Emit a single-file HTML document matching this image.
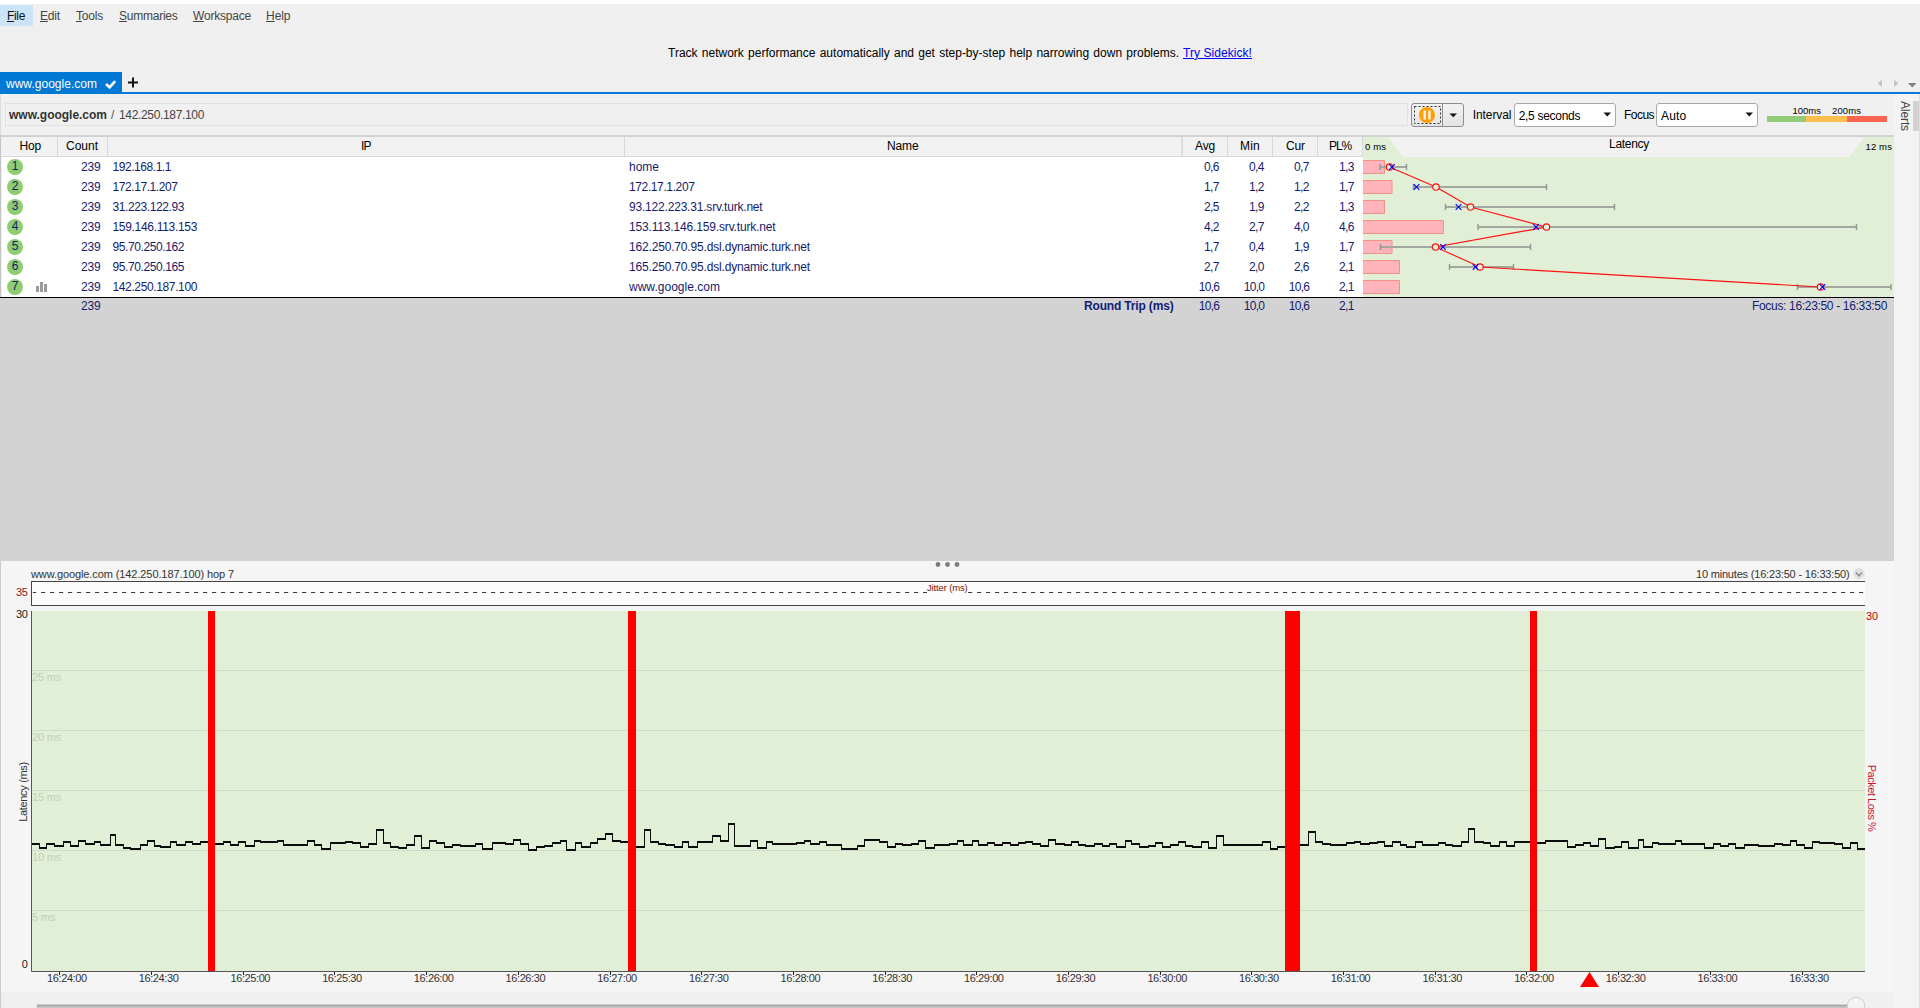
<!DOCTYPE html><html><head><meta charset="utf-8"><title>PingPlotter</title><style>
html,body{margin:0;padding:0;}body{width:1920px;height:1008px;position:relative;overflow:hidden;background:#f0f0f0;font-family:"Liberation Sans", sans-serif;}
.t{position:absolute;white-space:pre;line-height:1;margin:0;padding:0;}
.b{position:absolute;}
svg{position:absolute;left:0;top:0;}
</style></head><body>
<div class="b" style="left:0px;top:0px;width:1920px;height:4px;background:#fff;"></div>
<div class="b" style="left:0px;top:27px;width:1920px;height:45px;background:#efefef;"></div>
<div class="b" style="left:0px;top:5px;width:33px;height:21px;background:#cce4f7;"></div>
<div class="b" style="left:0px;top:72px;width:122px;height:21px;background:#0078d4;"></div>
<div class="b" style="left:0px;top:92px;width:1920px;height:2px;background:#0078d4;"></div>
<div class="b" style="left:0px;top:94px;width:1px;height:41px;background:#dcdcdc;"></div>
<div class="b" style="left:5px;top:103px;width:1403px;height:23px;background:#f0f0f0;border:1px solid #e2e2e2;box-sizing:border-box;"></div>
<div class="b" style="left:1411px;top:103px;width:53px;height:24px;box-sizing:border-box;border:1px solid #8e8e8e;border-radius:3px;background:linear-gradient(#f2f2f2,#e4e4e4);"></div>
<div class="b" style="left:1442px;top:104px;width:1px;height:22px;background:#8e8e8e;"></div>
<div class="b" style="left:1514px;top:103px;width:102px;height:24px;box-sizing:border-box;border:1px solid #a8a8a8;border-radius:3px;background:#fff;"></div>
<div class="b" style="left:1656px;top:103px;width:102px;height:24px;box-sizing:border-box;border:1px solid #a8a8a8;border-radius:3px;background:#fff;"></div>
<div class="b" style="left:1767px;top:116px;width:39px;height:6px;background:#93cb76;"></div>
<div class="b" style="left:1806px;top:116px;width:41px;height:6px;background:#fdbd4f;"></div>
<div class="b" style="left:1847px;top:116px;width:40px;height:6px;background:#f96352;"></div>
<div class="b" style="left:1894px;top:94px;width:26px;height:914px;background:#f3f3f3;"></div>
<div class="b" style="left:1913px;top:101px;width:7px;height:30px;background:#d2d2d2;"></div>
<div class="b" style="left:1919px;top:94px;width:1px;height:914px;background:#e0e0e0;"></div>
<div class="b" style="left:0px;top:135px;width:1894px;height:2px;background:#d2d2d2;"></div>
<div class="b" style="left:0px;top:137px;width:1px;height:160px;background:#c4c4c4;"></div>
<div class="b" style="left:2px;top:137px;width:1892px;height:20px;background:#f2f2f2;"></div>
<div class="b" style="left:57px;top:137px;width:1px;height:19px;background:#d9d9d9;"></div>
<div class="b" style="left:107px;top:137px;width:1px;height:19px;background:#d9d9d9;"></div>
<div class="b" style="left:624px;top:137px;width:1px;height:19px;background:#d9d9d9;"></div>
<div class="b" style="left:1182px;top:137px;width:1px;height:19px;background:#d9d9d9;"></div>
<div class="b" style="left:1227px;top:137px;width:1px;height:19px;background:#d9d9d9;"></div>
<div class="b" style="left:1272px;top:137px;width:1px;height:19px;background:#d9d9d9;"></div>
<div class="b" style="left:1317px;top:137px;width:1px;height:19px;background:#d9d9d9;"></div>
<div class="b" style="left:1362px;top:137px;width:1px;height:19px;background:#d9d9d9;"></div>
<div class="b" style="left:1181px;top:137px;width:1px;height:19px;background:#e2e2e2;"></div>
<div class="b" style="left:2px;top:156px;width:1361px;height:1px;background:#d9d9d9;"></div>
<div class="b" style="left:2px;top:157px;width:1361px;height:140px;background:#fff;"></div>
<div class="b" style="left:1363px;top:157px;width:531px;height:140px;background:#e0efd6;"></div>
<div class="b" style="left:0px;top:297px;width:1894px;height:264px;background:#d3d3d3;"></div>
<div class="b" style="left:0px;top:297px;width:1894px;height:1px;background:#000;"></div>
<div class="b" style="left:0px;top:561px;width:1894px;height:431px;background:#f5f5f5;"></div>
<div class="b" style="left:0px;top:561px;width:1px;height:447px;background:#cbcbcb;"></div>
<div class="b" style="left:2px;top:992px;width:1892px;height:16px;background:#f0f0f0;"></div>
<div class="b" style="left:31px;top:581px;width:1834px;height:25px;background:#fcfcfc;border:1px solid #444;border-right:none;box-sizing:border-box;"></div>
<div class="b" style="left:32px;top:611px;width:1833px;height:360px;background:#e0efd6;"></div>
<svg width="1920" height="1008" viewBox="0 0 1920 1008"><path d="M106 84l3.6 3.3l5.6-6.2" fill="none" stroke="#fff" stroke-width="2.6"/><path d="M128 82.5h10M133 77.5v10" stroke="#151515" stroke-width="2"/><path d="M1882 79.5v7.5l-4.5-3.75z" fill="#c4c4c4"/><path d="M1894 79.5v7.5l4.5-3.75z" fill="#c4c4c4"/><path d="M1908 83h8.5l-4.25 4.5z" fill="#808080"/><rect x="1414.5" y="106.5" width="26" height="17" fill="none" stroke="#333" stroke-width="1" stroke-dasharray="2 2"/><circle cx="1427" cy="115" r="8" fill="#ffa000"/><rect x="1423.5" y="110.5" width="2.3" height="9" fill="#eef3ff"/><rect x="1428.3" y="110.5" width="2.3" height="9" fill="#eef3ff"/><path d="M1449.5 113.5h7.5l-3.75 3.8z" fill="#111"/><path d="M1603.5 112.5h7.5l-3.75 4z" fill="#111"/><path d="M1745.5 112.5h7.5l-3.75 4z" fill="#111"/><path d="M1363 137H1388.4L1403 157H1363z" fill="#e0efd6"/><path d="M1864.4 137H1894V157H1849.4z" fill="#e0efd6"/><circle cx="15" cy="167" r="8" fill="#90cc70"/><circle cx="15" cy="187" r="8" fill="#90cc70"/><circle cx="15" cy="207" r="8" fill="#90cc70"/><circle cx="15" cy="227" r="8" fill="#90cc70"/><circle cx="15" cy="247" r="8" fill="#90cc70"/><circle cx="15" cy="267" r="8" fill="#90cc70"/><circle cx="15" cy="287" r="8" fill="#90cc70"/><path d="M36 286h3v6h-3zM40 282h3v10h-3zM44 284h3v8h-3z" fill="#9b9b9b"/><rect x="1363" y="160" width="21.5" height="14" fill="#ffb3ba"/><path d="M1363 160.5H1384.5V173.5H1363" fill="none" stroke="#f29284" stroke-width="1"/><rect x="1363" y="180" width="29" height="14" fill="#ffb3ba"/><path d="M1363 180.5H1392V193.5H1363" fill="none" stroke="#f29284" stroke-width="1"/><rect x="1363" y="200" width="21.5" height="14" fill="#ffb3ba"/><path d="M1363 200.5H1384.5V213.5H1363" fill="none" stroke="#f29284" stroke-width="1"/><rect x="1363" y="220" width="80.5" height="14" fill="#ffb3ba"/><path d="M1363 220.5H1443.5V233.5H1363" fill="none" stroke="#f29284" stroke-width="1"/><rect x="1363" y="240" width="29" height="14" fill="#ffb3ba"/><path d="M1363 240.5H1392V253.5H1363" fill="none" stroke="#f29284" stroke-width="1"/><rect x="1363" y="260" width="36.5" height="14" fill="#ffb3ba"/><path d="M1363 260.5H1399.5V273.5H1363" fill="none" stroke="#f29284" stroke-width="1"/><rect x="1363" y="280" width="36.5" height="14" fill="#ffb3ba"/><path d="M1363 280.5H1399.5V293.5H1363" fill="none" stroke="#f29284" stroke-width="1"/><path d="M1380 167H1406.5" stroke="#a2a8a0" stroke-width="2" fill="none"/><path d="M1380 164v6M1406.5 164v6" stroke="#909690" stroke-width="1.4" fill="none"/><path d="M1413.5 187H1546.5" stroke="#a2a8a0" stroke-width="2" fill="none"/><path d="M1413.5 184v6M1546.5 184v6" stroke="#909690" stroke-width="1.4" fill="none"/><path d="M1445.5 207H1614.5" stroke="#a2a8a0" stroke-width="2" fill="none"/><path d="M1445.5 204v6M1614.5 204v6" stroke="#909690" stroke-width="1.4" fill="none"/><path d="M1478 227H1856.5" stroke="#a2a8a0" stroke-width="2" fill="none"/><path d="M1478 224v6M1856.5 224v6" stroke="#909690" stroke-width="1.4" fill="none"/><path d="M1380.5 247H1530.5" stroke="#a2a8a0" stroke-width="2" fill="none"/><path d="M1380.5 244v6M1530.5 244v6" stroke="#909690" stroke-width="1.4" fill="none"/><path d="M1449.5 267H1513.5" stroke="#a2a8a0" stroke-width="2" fill="none"/><path d="M1449.5 264v6M1513.5 264v6" stroke="#909690" stroke-width="1.4" fill="none"/><path d="M1797.5 287H1891" stroke="#a2a8a0" stroke-width="2" fill="none"/><path d="M1797.5 284v6M1891 284v6" stroke="#909690" stroke-width="1.4" fill="none"/><polyline points="1389.5,167 1436,187 1470.5,207 1546.5,227 1435.5,247 1480,267 1820.5,287" fill="none" stroke="#ff1010" stroke-width="1.15"/><circle cx="1389.5" cy="167" r="3.2" fill="#e0efd6" stroke="#ff1010" stroke-width="1.15"/><circle cx="1436" cy="187" r="3.2" fill="#e0efd6" stroke="#ff1010" stroke-width="1.15"/><circle cx="1470.5" cy="207" r="3.2" fill="#e0efd6" stroke="#ff1010" stroke-width="1.15"/><circle cx="1546.5" cy="227" r="3.2" fill="#e0efd6" stroke="#ff1010" stroke-width="1.15"/><circle cx="1435.5" cy="247" r="3.2" fill="#e0efd6" stroke="#ff1010" stroke-width="1.15"/><circle cx="1480" cy="267" r="3.2" fill="#e0efd6" stroke="#ff1010" stroke-width="1.15"/><circle cx="1820.5" cy="287" r="3.2" fill="#e0efd6" stroke="#ff1010" stroke-width="1.15"/><path d="M1389.2 164.2l5.6 5.6M1389.2 169.8l5.6 -5.6" stroke="#0000ff" stroke-width="1.1" fill="none"/><path d="M1413.7 184.2l5.6 5.6M1413.7 189.8l5.6 -5.6" stroke="#0000ff" stroke-width="1.1" fill="none"/><path d="M1455.7 204.2l5.6 5.6M1455.7 209.8l5.6 -5.6" stroke="#0000ff" stroke-width="1.1" fill="none"/><path d="M1533.2 224.2l5.6 5.6M1533.2 229.8l5.6 -5.6" stroke="#0000ff" stroke-width="1.1" fill="none"/><path d="M1440.2 244.2l5.6 5.6M1440.2 249.8l5.6 -5.6" stroke="#0000ff" stroke-width="1.1" fill="none"/><path d="M1472.7 264.2l5.6 5.6M1472.7 269.8l5.6 -5.6" stroke="#0000ff" stroke-width="1.1" fill="none"/><path d="M1819.7 284.2l5.6 5.6M1819.7 289.8l5.6 -5.6" stroke="#0000ff" stroke-width="1.1" fill="none"/><circle cx="938" cy="564.5" r="2.4" fill="#7c7c7c"/><circle cx="947.5" cy="564.5" r="2.4" fill="#7c7c7c"/><circle cx="957" cy="564.5" r="2.4" fill="#7c7c7c"/><circle cx="1859" cy="573.8" r="5.7" fill="#e0e0e0"/><path d="M1856 572.6l3 3.2l3-3.2" fill="none" stroke="#909090" stroke-width="1.5"/><path d="M32.9 592.5H1864" stroke="#3a3a3a" stroke-width="1.2" stroke-dasharray="4.2 4.8" stroke-dashoffset="0.9" fill="none"/><path d="M32 670.5H1865" stroke="#cfddc6" stroke-width="1"/><path d="M32 730.5H1865" stroke="#cfddc6" stroke-width="1"/><path d="M32 790.5H1865" stroke="#cfddc6" stroke-width="1"/><path d="M32 850.5H1865" stroke="#cfddc6" stroke-width="1"/><path d="M32 910.5H1865" stroke="#cfddc6" stroke-width="1"/><path d="M31.5 611V971.5H1865" stroke="#555" stroke-width="1" fill="none"/><path d="M32 843h8v2h-8zM39 843h1v6h-1zM39 847h8v2h-8zM46 843h1v6h-1zM46 843h9v2h-9zM54 843h1v4h-1zM54 845h10v2h-10zM63 841h1v6h-1zM63 841h8v2h-8zM70 841h1v6h-1zM70 845h9v2h-9zM78 840h1v7h-1zM78 840h8v2h-8zM85 840h1v5h-1zM85 843h10v2h-10zM94 841h1v4h-1zM94 841h7v2h-7zM100 841h1v5h-1zM100 844h11v2h-11zM110 834h1v12h-1zM110 834h6v2h-6zM115 834h1v12h-1zM115 844h9v2h-9zM123 844h1v5h-1zM123 847h8v2h-8zM130 847h1v3h-1zM130 848h11v2h-11zM140 844h1v6h-1zM140 844h8v2h-8zM147 840h1v6h-1zM147 840h8v2h-8zM154 840h1v7h-1zM154 845h7v2h-7zM160 845h1v3h-1zM160 846h11v2h-11zM170 841h1v7h-1zM170 841h7v2h-7zM176 841h1v5h-1zM176 844h10v2h-10zM185 841h1v5h-1zM185 841h8v2h-8zM192 841h1v4h-1zM192 843h9v2h-9zM200 841h1v4h-1zM200 841h12v2h-12zM211 841h1v4h-1zM211 843h13v2h-13zM223 841h1v4h-1zM223 841h8v2h-8zM230 841h1v5h-1zM230 844h9v2h-9zM238 841h1v5h-1zM238 841h8v2h-8zM245 841h1v6h-1zM245 845h10v2h-10zM254 840h1v7h-1zM254 840h7v2h-7zM260 840h1v3h-1zM260 841h18v2h-18zM277 840h1v3h-1zM277 840h7v2h-7zM283 840h1v6h-1zM283 844h25v2h-25zM307 840h1v6h-1zM307 840h8v2h-8zM314 840h1v6h-1zM314 844h8v2h-8zM321 844h1v6h-1zM321 848h10v2h-10zM330 842h1v8h-1zM330 842h16v2h-16zM345 841h1v3h-1zM345 841h8v2h-8zM352 841h1v3h-1zM352 842h9v2h-9zM360 842h1v6h-1zM360 846h9v2h-9zM368 843h1v5h-1zM368 843h9v2h-9zM376 829h1v16h-1zM376 829h8v2h-8zM383 829h1v15h-1zM383 842h8v2h-8zM390 842h1v6h-1zM390 846h9v2h-9zM398 846h1v3h-1zM398 847h9v2h-9zM406 844h1v5h-1zM406 844h9v2h-9zM414 835h1v11h-1zM414 835h8v2h-8zM421 835h1v14h-1zM421 847h9v2h-9zM429 840h1v9h-1zM429 840h8v2h-8zM436 840h1v4h-1zM436 842h9v2h-9zM444 842h1v6h-1zM444 846h9v2h-9zM452 844h1v4h-1zM452 844h9v2h-9zM460 844h1v3h-1zM460 845h16v2h-16zM475 843h1v4h-1zM475 843h8v2h-8zM482 843h1v7h-1zM482 848h11v2h-11zM492 842h1v8h-1zM492 842h14v2h-14zM505 842h1v3h-1zM505 843h9v2h-9zM513 839h1v6h-1zM513 839h8v2h-8zM520 839h1v6h-1zM520 843h9v2h-9zM528 843h1v8h-1zM528 849h9v2h-9zM536 846h1v5h-1zM536 846h9v2h-9zM544 845h1v3h-1zM544 845h9v2h-9zM552 842h1v5h-1zM552 842h9v2h-9zM560 840h1v4h-1zM560 840h7v2h-7zM566 840h1v11h-1zM566 849h10v2h-10zM575 842h1v9h-1zM575 842h7v2h-7zM581 842h1v6h-1zM581 846h10v2h-10zM590 842h1v6h-1zM590 842h8v2h-8zM597 838h1v6h-1zM597 838h9v2h-9zM605 833h1v7h-1zM605 833h8v2h-8zM612 833h1v9h-1zM612 840h9v2h-9zM620 840h1v3h-1zM620 841h13v2h-13zM632 841h1v7h-1zM632 846h13v2h-13zM644 829h1v19h-1zM644 829h7v2h-7zM650 829h1v14h-1zM650 841h9v2h-9zM658 841h1v4h-1zM658 843h8v2h-8zM665 843h1v3h-1zM665 844h10v2h-10zM674 844h1v4h-1zM674 846h9v2h-9zM682 841h1v7h-1zM682 841h7v2h-7zM688 841h1v7h-1zM688 846h10v2h-10zM697 841h1v7h-1zM697 841h16v2h-16zM712 835h1v8h-1zM712 835h9v2h-9zM720 835h1v7h-1zM720 840h9v2h-9zM728 823h1v19h-1zM728 823h7v2h-7zM734 823h1v24h-1zM734 845h17v2h-17zM750 840h1v7h-1zM750 840h8v2h-8zM757 840h1v9h-1zM757 847h10v2h-10zM766 841h1v8h-1zM766 841h7v2h-7zM772 841h1v4h-1zM772 843h25v2h-25zM796 842h1v3h-1zM796 842h9v2h-9zM804 840h1v4h-1zM804 840h7v2h-7zM810 840h1v5h-1zM810 843h10v2h-10zM819 841h1v4h-1zM819 841h8v2h-8zM826 841h1v5h-1zM826 844h16v2h-16zM841 844h1v6h-1zM841 848h17v2h-17zM857 845h1v5h-1zM857 845h8v2h-8zM864 839h1v8h-1zM864 839h16v2h-16zM879 839h1v4h-1zM879 841h9v2h-9zM887 841h1v7h-1zM887 846h9v2h-9zM895 843h1v5h-1zM895 843h8v2h-8zM902 843h1v3h-1zM902 844h10v2h-10zM911 843h1v3h-1zM911 843h8v2h-8zM918 840h1v5h-1zM918 840h8v2h-8zM925 840h1v9h-1zM925 847h10v2h-10zM934 844h1v5h-1zM934 844h16v2h-16zM949 843h1v3h-1zM949 843h9v2h-9zM957 840h1v5h-1zM957 840h7v2h-7zM963 840h1v6h-1zM963 844h10v2h-10zM972 840h1v6h-1zM972 840h7v2h-7zM978 840h1v6h-1zM978 844h10v2h-10zM987 842h1v4h-1zM987 842h8v2h-8zM994 842h1v4h-1zM994 844h9v2h-9zM1002 842h1v4h-1zM1002 842h9v2h-9zM1010 842h1v4h-1zM1010 844h9v2h-9zM1018 842h1v4h-1zM1018 842h8v2h-8zM1025 841h1v3h-1zM1025 841h8v2h-8zM1032 841h1v4h-1zM1032 843h9v2h-9zM1040 843h1v4h-1zM1040 845h9v2h-9zM1048 839h1v8h-1zM1048 839h8v2h-8zM1055 839h1v6h-1zM1055 843h10v2h-10zM1064 843h1v3h-1zM1064 844h8v2h-8zM1071 841h1v5h-1zM1071 841h8v2h-8zM1078 841h1v5h-1zM1078 844h8v2h-8zM1085 844h1v3h-1zM1085 845h10v2h-10zM1094 843h1v4h-1zM1094 843h9v2h-9zM1102 843h1v4h-1zM1102 845h8v2h-8zM1109 843h1v4h-1zM1109 843h8v2h-8zM1116 843h1v5h-1zM1116 846h10v2h-10zM1125 840h1v8h-1zM1125 840h7v2h-7zM1131 840h1v5h-1zM1131 843h9v2h-9zM1139 843h1v5h-1zM1139 846h10v2h-10zM1148 845h1v3h-1zM1148 845h8v2h-8zM1155 842h1v5h-1zM1155 842h8v2h-8zM1162 842h1v6h-1zM1162 846h9v2h-9zM1170 844h1v4h-1zM1170 844h9v2h-9zM1178 841h1v5h-1zM1178 841h8v2h-8zM1185 841h1v6h-1zM1185 845h8v2h-8zM1192 845h1v3h-1zM1192 846h10v2h-10zM1201 841h1v7h-1zM1201 841h8v2h-8zM1208 841h1v8h-1zM1208 847h9v2h-9zM1216 835h1v14h-1zM1216 835h8v2h-8zM1223 835h1v11h-1zM1223 844h40v2h-40zM1262 841h1v5h-1zM1262 841h9v2h-9zM1270 841h1v9h-1zM1270 848h8v2h-8zM1277 846h1v4h-1zM1277 846h16v2h-16zM1292 844h1v4h-1zM1292 844h17v2h-17zM1308 831h1v15h-1zM1308 831h8v2h-8zM1315 831h1v12h-1zM1315 841h8v2h-8zM1322 841h1v4h-1zM1322 843h9v2h-9zM1330 843h1v3h-1zM1330 844h17v2h-17zM1346 842h1v4h-1zM1346 842h9v2h-9zM1354 841h1v3h-1zM1354 841h7v2h-7zM1360 841h1v4h-1zM1360 843h10v2h-10zM1369 842h1v3h-1zM1369 842h9v2h-9zM1377 841h1v3h-1zM1377 841h8v2h-8zM1384 841h1v6h-1zM1384 845h9v2h-9zM1392 841h1v6h-1zM1392 841h9v2h-9zM1400 841h1v5h-1zM1400 844h7v2h-7zM1406 844h1v4h-1zM1406 846h10v2h-10zM1415 841h1v7h-1zM1415 841h8v2h-8zM1422 841h1v5h-1zM1422 844h17v2h-17zM1438 842h1v4h-1zM1438 842h8v2h-8zM1445 842h1v4h-1zM1445 844h8v2h-8zM1452 844h1v3h-1zM1452 845h10v2h-10zM1461 841h1v6h-1zM1461 841h8v2h-8zM1468 828h1v15h-1zM1468 828h7v2h-7zM1474 828h1v15h-1zM1474 841h10v2h-10zM1483 841h1v3h-1zM1483 842h8v2h-8zM1490 842h1v5h-1zM1490 845h10v2h-10zM1499 841h1v6h-1zM1499 841h8v2h-8zM1506 841h1v6h-1zM1506 845h9v2h-9zM1514 841h1v6h-1zM1514 841h20v2h-20zM1533 841h1v3h-1zM1533 842h13v2h-13zM1545 840h1v4h-1zM1545 840h23v2h-23zM1567 840h1v8h-1zM1567 846h9v2h-9zM1575 844h1v4h-1zM1575 844h9v2h-9zM1583 842h1v4h-1zM1583 842h8v2h-8zM1590 842h1v5h-1zM1590 845h9v2h-9zM1598 838h1v9h-1zM1598 838h8v2h-8zM1605 838h1v11h-1zM1605 847h10v2h-10zM1614 846h1v3h-1zM1614 846h8v2h-8zM1621 841h1v7h-1zM1621 841h8v2h-8zM1628 841h1v8h-1zM1628 847h11v2h-11zM1638 839h1v10h-1zM1638 839h6v2h-6zM1643 839h1v9h-1zM1643 846h10v2h-10zM1652 842h1v6h-1zM1652 842h7v2h-7zM1658 842h1v3h-1zM1658 843h18v2h-18zM1675 840h1v5h-1zM1675 840h7v2h-7zM1681 840h1v5h-1zM1681 843h24v2h-24zM1704 843h1v6h-1zM1704 847h10v2h-10zM1713 843h1v6h-1zM1713 843h8v2h-8zM1720 843h1v4h-1zM1720 845h9v2h-9zM1728 843h1v4h-1zM1728 843h8v2h-8zM1735 843h1v6h-1zM1735 847h10v2h-10zM1744 844h1v5h-1zM1744 844h15v2h-15zM1758 844h1v3h-1zM1758 845h17v2h-17zM1774 843h1v4h-1zM1774 843h9v2h-9zM1782 843h1v3h-1zM1782 844h9v2h-9zM1790 840h1v6h-1zM1790 840h7v2h-7zM1796 840h1v6h-1zM1796 844h9v2h-9zM1804 844h1v5h-1zM1804 847h9v2h-9zM1812 841h1v8h-1zM1812 841h8v2h-8zM1819 841h1v3h-1zM1819 842h16v2h-16zM1834 842h1v3h-1zM1834 843h9v2h-9zM1842 843h1v6h-1zM1842 847h9v2h-9zM1850 842h1v7h-1zM1850 842h8v2h-8zM1857 842h1v8h-1zM1857 848h8v2h-8z" fill="#0c0c0c"/><rect x="208" y="611" width="7" height="360" fill="#ff0000"/><rect x="628" y="611" width="8" height="360" fill="#ff0000"/><rect x="1285" y="611" width="15" height="360" fill="#ff0000"/><rect x="1530" y="611" width="7" height="360" fill="#ff0000"/><path d="M59.5 972v3" stroke="#222" stroke-width="1"/><path d="M151.5 972v3" stroke="#222" stroke-width="1"/><path d="M243.5 972v3" stroke="#222" stroke-width="1"/><path d="M334.5 972v3" stroke="#222" stroke-width="1"/><path d="M426.5 972v3" stroke="#222" stroke-width="1"/><path d="M518.5 972v3" stroke="#222" stroke-width="1"/><path d="M610.5 972v3" stroke="#222" stroke-width="1"/><path d="M701.5 972v3" stroke="#222" stroke-width="1"/><path d="M793.5 972v3" stroke="#222" stroke-width="1"/><path d="M885.5 972v3" stroke="#222" stroke-width="1"/><path d="M976.5 972v3" stroke="#222" stroke-width="1"/><path d="M1068.5 972v3" stroke="#222" stroke-width="1"/><path d="M1160.5 972v3" stroke="#222" stroke-width="1"/><path d="M1251.5 972v3" stroke="#222" stroke-width="1"/><path d="M1343.5 972v3" stroke="#222" stroke-width="1"/><path d="M1435.5 972v3" stroke="#222" stroke-width="1"/><path d="M1526.5 972v3" stroke="#222" stroke-width="1"/><path d="M1618.5 972v3" stroke="#222" stroke-width="1"/><path d="M1710.5 972v3" stroke="#222" stroke-width="1"/><path d="M1802.5 972v3" stroke="#222" stroke-width="1"/><path d="M1589.5 972l9.5 15h-19z" fill="#ff0000"/><defs><linearGradient id="sg" x1="0" y1="0" x2="0" y2="1"><stop offset="0" stop-color="#9c9c9c"/><stop offset="1" stop-color="#cdcdcd"/></linearGradient></defs><rect x="36.7" y="1004.6" width="1812" height="3.4" fill="url(#sg)"/><circle cx="1856" cy="1006" r="8.8" fill="#f3f3f3" stroke="#cfcfcf" stroke-width="1"/></svg>
<div class="t" id="t0" style="left:7px;top:9.842px;font-size:12px;color:#111;letter-spacing:-0.340px;"><u>F</u>ile</div>
<div class="t" id="t1" style="left:40px;top:9.842px;font-size:12px;color:#444;letter-spacing:-0.176px;"><u>E</u>dit</div>
<div class="t" id="t2" style="left:76px;top:9.842px;font-size:12px;color:#444;letter-spacing:-0.203px;"><u>T</u>ools</div>
<div class="t" id="t3" style="left:119px;top:9.842px;font-size:12px;color:#444;letter-spacing:-0.245px;"><u>S</u>ummaries</div>
<div class="t" id="t4" style="left:193px;top:9.842px;font-size:12px;color:#444;letter-spacing:-0.201px;"><u>W</u>orkspace</div>
<div class="t" id="t5" style="left:266px;top:9.842px;font-size:12px;color:#444;letter-spacing:-0.047px;"><u>H</u>elp</div>
<div class="t" id="t6" style="left:668px;top:46.842px;font-size:12px;color:#000;word-spacing:0.920px;">Track network performance automatically and get step-by-step help narrowing down problems.</div>
<div class="t" id="t7" style="left:1183px;top:46.842px;font-size:12px;color:#0000ee;letter-spacing:0.059px;text-decoration:underline;">Try Sidekick!</div>
<div class="t" id="t8" style="left:6px;top:77.842px;font-size:12px;color:#fff;letter-spacing:0.020px;">www.google.com</div>
<div class="t" id="t9" style="left:9px;top:108.842px;font-size:12px;color:#333;font-weight:700;letter-spacing:-0.017px;">www.google.com</div>
<div class="t" id="t10" style="left:111px;top:108.842px;font-size:12px;color:#555;letter-spacing:0.656px;">/</div>
<div class="t" id="t11" style="left:119px;top:108.842px;font-size:12px;color:#444;letter-spacing:-0.340px;">142.250.187.100</div>
<div class="t" id="t12" style="left:1472.8px;top:108.842px;font-size:12px;color:#000;letter-spacing:-0.107px;">Interval</div>
<div class="t" id="t13" style="left:1518.7px;top:109.842px;font-size:12px;color:#000;letter-spacing:-0.293px;">2,5 seconds</div>
<div class="t" id="t14" style="left:1624px;top:108.842px;font-size:12px;color:#000;letter-spacing:-0.537px;">Focus</div>
<div class="t" id="t15" style="left:1661px;top:109.842px;font-size:12px;color:#000;letter-spacing:0.178px;">Auto</div>
<div class="t" id="t16" style="left:1792.5px;top:105.958px;font-size:9.5px;color:#000;letter-spacing:-0.003px;">100ms</div>
<div class="t" id="t17" style="left:1832px;top:105.958px;font-size:9.5px;color:#000;letter-spacing:0.097px;">200ms</div>
<div class="t" id="t18" style="left:19.5px;top:139.842px;font-size:12px;color:#000;letter-spacing:-0.172px;">Hop</div>
<div class="t" id="t19" style="left:66px;top:139.842px;font-size:12px;color:#000;letter-spacing:-0.006px;">Count</div>
<div class="t" id="t20" style="left:361px;top:139.842px;font-size:12px;color:#000;letter-spacing:-0.922px;">IP</div>
<div class="t" id="t21" style="left:887px;top:139.842px;font-size:12px;color:#000;letter-spacing:-0.129px;">Name</div>
<div class="t" id="t22" style="left:1195px;top:139.842px;font-size:12px;color:#000;letter-spacing:-0.156px;">Avg</div>
<div class="t" id="t23" style="left:1240px;top:139.842px;font-size:12px;color:#000;letter-spacing:0.219px;">Min</div>
<div class="t" id="t24" style="left:1286px;top:139.842px;font-size:12px;color:#000;letter-spacing:-0.115px;">Cur</div>
<div class="t" id="t25" style="left:1329px;top:139.842px;font-size:12px;color:#000;letter-spacing:-1.120px;">PL%</div>
<div class="t" id="t26" style="left:1365px;top:141.958px;font-size:9.5px;color:#000;letter-spacing:0.102px;">0 ms</div>
<div class="t" id="t27" style="left:1609px;top:137.842px;font-size:12px;color:#000;letter-spacing:-0.290px;">Latency</div>
<div class="t" id="t28" style="left:1865.6px;top:141.958px;font-size:9.5px;color:#000;letter-spacing:0.105px;">12 ms</div>
<div class="t" id="t29" style="left:11.8px;top:159.842px;font-size:12px;color:#141c6c;letter-spacing:-0.088px;">1</div>
<div class="t" id="t30" style="left:81px;top:160.842px;font-size:12px;color:#141c6c;letter-spacing:-0.177px;">239</div>
<div class="t" id="t31" style="left:112.5px;top:160.842px;font-size:12px;color:#141c6c;letter-spacing:-0.446px;">192.168.1.1</div>
<div class="t" id="t32" style="left:629px;top:160.842px;font-size:12px;color:#141c6c;letter-spacing:-0.008px;">home</div>
<div class="t" id="t33" style="left:1203.96px;top:160.842px;font-size:12px;color:#141c6c;letter-spacing:-0.649px;">0,6</div>
<div class="t" id="t34" style="left:1248.96px;top:160.842px;font-size:12px;color:#141c6c;letter-spacing:-0.649px;">0,4</div>
<div class="t" id="t35" style="left:1293.96px;top:160.842px;font-size:12px;color:#141c6c;letter-spacing:-0.649px;">0,7</div>
<div class="t" id="t36" style="left:1338.96px;top:160.842px;font-size:12px;color:#141c6c;letter-spacing:-0.649px;">1,3</div>
<div class="t" id="t37" style="left:11.8px;top:179.842px;font-size:12px;color:#141c6c;letter-spacing:-0.088px;">2</div>
<div class="t" id="t38" style="left:81px;top:180.842px;font-size:12px;color:#141c6c;letter-spacing:-0.177px;">239</div>
<div class="t" id="t39" style="left:112.5px;top:180.842px;font-size:12px;color:#141c6c;letter-spacing:-0.423px;">172.17.1.207</div>
<div class="t" id="t40" style="left:629px;top:180.842px;font-size:12px;color:#141c6c;letter-spacing:-0.382px;">172.17.1.207</div>
<div class="t" id="t41" style="left:1203.96px;top:180.842px;font-size:12px;color:#141c6c;letter-spacing:-0.649px;">1,7</div>
<div class="t" id="t42" style="left:1248.96px;top:180.842px;font-size:12px;color:#141c6c;letter-spacing:-0.649px;">1,2</div>
<div class="t" id="t43" style="left:1293.96px;top:180.842px;font-size:12px;color:#141c6c;letter-spacing:-0.649px;">1,2</div>
<div class="t" id="t44" style="left:1338.96px;top:180.842px;font-size:12px;color:#141c6c;letter-spacing:-0.649px;">1,7</div>
<div class="t" id="t45" style="left:11.8px;top:199.842px;font-size:12px;color:#141c6c;letter-spacing:-0.088px;">3</div>
<div class="t" id="t46" style="left:81px;top:200.842px;font-size:12px;color:#141c6c;letter-spacing:-0.177px;">239</div>
<div class="t" id="t47" style="left:112.5px;top:200.842px;font-size:12px;color:#141c6c;letter-spacing:-0.404px;">31.223.122.93</div>
<div class="t" id="t48" style="left:629px;top:200.842px;font-size:12px;color:#141c6c;letter-spacing:-0.194px;">93.122.223.31.srv.turk.net</div>
<div class="t" id="t49" style="left:1203.96px;top:200.842px;font-size:12px;color:#141c6c;letter-spacing:-0.649px;">2,5</div>
<div class="t" id="t50" style="left:1248.96px;top:200.842px;font-size:12px;color:#141c6c;letter-spacing:-0.649px;">1,9</div>
<div class="t" id="t51" style="left:1293.96px;top:200.842px;font-size:12px;color:#141c6c;letter-spacing:-0.649px;">2,2</div>
<div class="t" id="t52" style="left:1338.96px;top:200.842px;font-size:12px;color:#141c6c;letter-spacing:-0.649px;">1,3</div>
<div class="t" id="t53" style="left:11.8px;top:219.842px;font-size:12px;color:#141c6c;letter-spacing:-0.088px;">4</div>
<div class="t" id="t54" style="left:81px;top:220.842px;font-size:12px;color:#141c6c;letter-spacing:-0.177px;">239</div>
<div class="t" id="t55" style="left:112.5px;top:220.842px;font-size:12px;color:#141c6c;letter-spacing:-0.314px;">159.146.113.153</div>
<div class="t" id="t56" style="left:629px;top:220.842px;font-size:12px;color:#141c6c;letter-spacing:-0.161px;">153.113.146.159.srv.turk.net</div>
<div class="t" id="t57" style="left:1203.96px;top:220.842px;font-size:12px;color:#141c6c;letter-spacing:-0.649px;">4,2</div>
<div class="t" id="t58" style="left:1248.96px;top:220.842px;font-size:12px;color:#141c6c;letter-spacing:-0.649px;">2,7</div>
<div class="t" id="t59" style="left:1293.96px;top:220.842px;font-size:12px;color:#141c6c;letter-spacing:-0.649px;">4,0</div>
<div class="t" id="t60" style="left:1338.96px;top:220.842px;font-size:12px;color:#141c6c;letter-spacing:-0.649px;">4,6</div>
<div class="t" id="t61" style="left:11.8px;top:239.842px;font-size:12px;color:#141c6c;letter-spacing:-0.088px;">5</div>
<div class="t" id="t62" style="left:81px;top:240.842px;font-size:12px;color:#141c6c;letter-spacing:-0.177px;">239</div>
<div class="t" id="t63" style="left:112.5px;top:240.842px;font-size:12px;color:#141c6c;letter-spacing:-0.404px;">95.70.250.162</div>
<div class="t" id="t64" style="left:629px;top:240.842px;font-size:12px;color:#141c6c;letter-spacing:-0.170px;">162.250.70.95.dsl.dynamic.turk.net</div>
<div class="t" id="t65" style="left:1203.96px;top:240.842px;font-size:12px;color:#141c6c;letter-spacing:-0.649px;">1,7</div>
<div class="t" id="t66" style="left:1248.96px;top:240.842px;font-size:12px;color:#141c6c;letter-spacing:-0.649px;">0,4</div>
<div class="t" id="t67" style="left:1293.96px;top:240.842px;font-size:12px;color:#141c6c;letter-spacing:-0.649px;">1,9</div>
<div class="t" id="t68" style="left:1338.96px;top:240.842px;font-size:12px;color:#141c6c;letter-spacing:-0.649px;">1,7</div>
<div class="t" id="t69" style="left:11.8px;top:259.842px;font-size:12px;color:#141c6c;letter-spacing:-0.088px;">6</div>
<div class="t" id="t70" style="left:81px;top:260.842px;font-size:12px;color:#141c6c;letter-spacing:-0.177px;">239</div>
<div class="t" id="t71" style="left:112.5px;top:260.842px;font-size:12px;color:#141c6c;letter-spacing:-0.404px;">95.70.250.165</div>
<div class="t" id="t72" style="left:629px;top:260.842px;font-size:12px;color:#141c6c;letter-spacing:-0.170px;">165.250.70.95.dsl.dynamic.turk.net</div>
<div class="t" id="t73" style="left:1203.96px;top:260.842px;font-size:12px;color:#141c6c;letter-spacing:-0.649px;">2,7</div>
<div class="t" id="t74" style="left:1248.96px;top:260.842px;font-size:12px;color:#141c6c;letter-spacing:-0.649px;">2,0</div>
<div class="t" id="t75" style="left:1293.96px;top:260.842px;font-size:12px;color:#141c6c;letter-spacing:-0.649px;">2,6</div>
<div class="t" id="t76" style="left:1338.96px;top:260.842px;font-size:12px;color:#141c6c;letter-spacing:-0.649px;">2,1</div>
<div class="t" id="t77" style="left:11.8px;top:279.842px;font-size:12px;color:#141c6c;letter-spacing:-0.088px;">7</div>
<div class="t" id="t78" style="left:81px;top:280.842px;font-size:12px;color:#141c6c;letter-spacing:-0.177px;">239</div>
<div class="t" id="t79" style="left:112.5px;top:280.842px;font-size:12px;color:#141c6c;letter-spacing:-0.373px;">142.250.187.100</div>
<div class="t" id="t80" style="left:629px;top:280.842px;font-size:12px;color:#141c6c;letter-spacing:0.020px;">www.google.com</div>
<div class="t" id="t81" style="left:1198.79px;top:280.842px;font-size:12px;color:#141c6c;letter-spacing:-0.737px;">10,6</div>
<div class="t" id="t82" style="left:1243.79px;top:280.842px;font-size:12px;color:#141c6c;letter-spacing:-0.737px;">10,0</div>
<div class="t" id="t83" style="left:1288.79px;top:280.842px;font-size:12px;color:#141c6c;letter-spacing:-0.737px;">10,6</div>
<div class="t" id="t84" style="left:1338.96px;top:280.842px;font-size:12px;color:#141c6c;letter-spacing:-0.649px;">2,1</div>
<div class="t" id="t85" style="left:81px;top:299.842px;font-size:12px;color:#141c6c;letter-spacing:-0.177px;">239</div>
<div class="t" id="t86" style="left:1084px;top:299.842px;font-size:12px;color:#12207a;font-weight:700;letter-spacing:-0.167px;">Round Trip (ms)</div>
<div class="t" id="t87" style="left:1198.79px;top:299.842px;font-size:12px;color:#141c6c;letter-spacing:-0.737px;">10,6</div>
<div class="t" id="t88" style="left:1243.79px;top:299.842px;font-size:12px;color:#141c6c;letter-spacing:-0.737px;">10,0</div>
<div class="t" id="t89" style="left:1288.79px;top:299.842px;font-size:12px;color:#141c6c;letter-spacing:-0.737px;">10,6</div>
<div class="t" id="t90" style="left:1338.96px;top:299.842px;font-size:12px;color:#141c6c;letter-spacing:-0.649px;">2,1</div>
<div class="t" id="t91" style="left:1752px;top:299.842px;font-size:12px;color:#141c6c;letter-spacing:-0.325px;">Focus: 16:23:50 - 16:33:50</div>
<div class="t" id="t92" style="left:31px;top:568.688px;font-size:11px;color:#333;letter-spacing:-0.097px;">www.google.com (142.250.187.100) hop 7</div>
<div class="t" id="t93" style="left:1696px;top:568.688px;font-size:11px;color:#333;letter-spacing:-0.191px;">10 minutes (16:23:50 - 16:33:50)</div>
<div class="t" id="t94" style="left:16px;top:586.688px;font-size:11px;color:#8b1a1a;letter-spacing:-0.375px;">35</div>
<div class="t" id="t95" style="left:16px;top:608.688px;font-size:11px;color:#222;letter-spacing:-0.375px;">30</div>
<div class="t" id="t96" style="left:1866px;top:610.688px;font-size:11px;color:#cc0000;letter-spacing:-0.125px;">30</div>
<div class="t" id="t97" style="left:21.8px;top:958.688px;font-size:11px;color:#222;letter-spacing:-0.225px;">0</div>
<div class="t" id="t98" style="left:32px;top:671.688px;font-size:11px;color:#c3d0bb;letter-spacing:-0.194px;">25 ms</div>
<div class="t" id="t99" style="left:32px;top:731.688px;font-size:11px;color:#c3d0bb;letter-spacing:-0.194px;">20 ms</div>
<div class="t" id="t100" style="left:32px;top:791.688px;font-size:11px;color:#c3d0bb;letter-spacing:-0.194px;">15 ms</div>
<div class="t" id="t101" style="left:32px;top:851.688px;font-size:11px;color:#c3d0bb;letter-spacing:-0.194px;">10 ms</div>
<div class="t" id="t102" style="left:32px;top:911.688px;font-size:11px;color:#c3d0bb;letter-spacing:-0.211px;">5 ms</div>
<div class="t" id="t103" style="left:927px;top:583.458px;font-size:9.5px;color:#7a0f0f;letter-spacing:-0.156px;background:#fcfcfc;">Jitter (ms)</div>
<div class="t" id="t104" style="left:47.1px;top:972.688px;font-size:11px;color:#333;letter-spacing:-0.404px;">16:24:00</div>
<div class="t" id="t105" style="left:138.79px;top:972.688px;font-size:11px;color:#333;letter-spacing:-0.404px;">16:24:30</div>
<div class="t" id="t106" style="left:230.48px;top:972.688px;font-size:11px;color:#333;letter-spacing:-0.404px;">16:25:00</div>
<div class="t" id="t107" style="left:322.17px;top:972.688px;font-size:11px;color:#333;letter-spacing:-0.404px;">16:25:30</div>
<div class="t" id="t108" style="left:413.86px;top:972.688px;font-size:11px;color:#333;letter-spacing:-0.404px;">16:26:00</div>
<div class="t" id="t109" style="left:505.55px;top:972.688px;font-size:11px;color:#333;letter-spacing:-0.404px;">16:26:30</div>
<div class="t" id="t110" style="left:597.24px;top:972.688px;font-size:11px;color:#333;letter-spacing:-0.404px;">16:27:00</div>
<div class="t" id="t111" style="left:688.93px;top:972.688px;font-size:11px;color:#333;letter-spacing:-0.404px;">16:27:30</div>
<div class="t" id="t112" style="left:780.62px;top:972.688px;font-size:11px;color:#333;letter-spacing:-0.404px;">16:28:00</div>
<div class="t" id="t113" style="left:872.31px;top:972.688px;font-size:11px;color:#333;letter-spacing:-0.404px;">16:28:30</div>
<div class="t" id="t114" style="left:964px;top:972.688px;font-size:11px;color:#333;letter-spacing:-0.404px;">16:29:00</div>
<div class="t" id="t115" style="left:1055.69px;top:972.688px;font-size:11px;color:#333;letter-spacing:-0.404px;">16:29:30</div>
<div class="t" id="t116" style="left:1147.38px;top:972.688px;font-size:11px;color:#333;letter-spacing:-0.404px;">16:30:00</div>
<div class="t" id="t117" style="left:1239.07px;top:972.688px;font-size:11px;color:#333;letter-spacing:-0.404px;">16:30:30</div>
<div class="t" id="t118" style="left:1330.76px;top:972.688px;font-size:11px;color:#333;letter-spacing:-0.404px;">16:31:00</div>
<div class="t" id="t119" style="left:1422.45px;top:972.688px;font-size:11px;color:#333;letter-spacing:-0.404px;">16:31:30</div>
<div class="t" id="t120" style="left:1514.14px;top:972.688px;font-size:11px;color:#333;letter-spacing:-0.404px;">16:32:00</div>
<div class="t" id="t121" style="left:1605.83px;top:972.688px;font-size:11px;color:#333;letter-spacing:-0.404px;">16:32:30</div>
<div class="t" id="t122" style="left:1697.52px;top:972.688px;font-size:11px;color:#333;letter-spacing:-0.404px;">16:33:00</div>
<div class="t" id="t123" style="left:1789.21px;top:972.688px;font-size:11px;color:#333;letter-spacing:-0.404px;">16:33:30</div>
<div class="t" id="r0" style="left:22.6px;top:791.6px;font-size:11px;color:#333;transform:translate(-50%,-50%) rotate(-90deg);letter-spacing:-0.323px;">Latency (ms)</div>
<div class="t" id="r1" style="left:1871px;top:798.3px;font-size:11px;color:#d0142c;transform:translate(-50%,-50%) rotate(90deg);letter-spacing:-0.474px;">Packet Loss %</div>
<div class="t" id="r2" style="left:1905px;top:116px;font-size:12px;color:#444;transform:translate(-50%,-50%) rotate(90deg);letter-spacing:-0.115px;">Alerts</div>
</body></html>
